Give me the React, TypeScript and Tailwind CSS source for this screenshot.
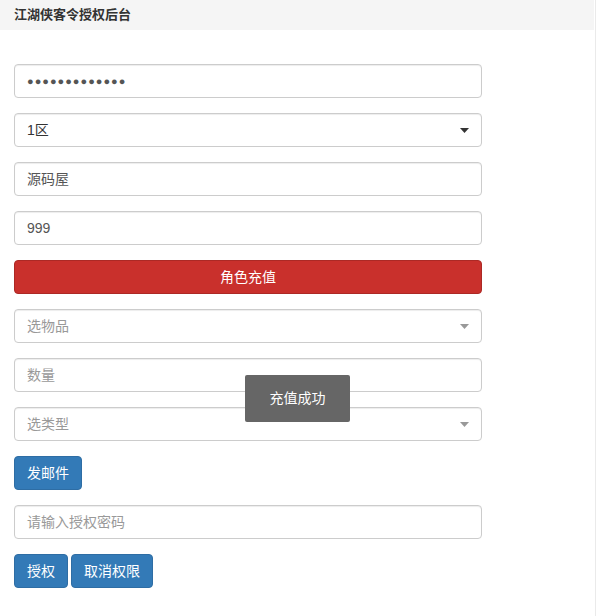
import React from "react";

const font = { fontFamily: '"Liberation Sans", "Noto Sans CJK SC", sans-serif' };

const inputCls =
  "block w-[468px] h-[34px] px-[12px] border border-[#ccc] rounded-[4px] bg-white text-[14px] text-[#555] shadow-[inset_0_1px_1px_rgba(0,0,0,0.075)] flex items-center";

function Caret({ color }: { color: string }) {
  return (
    <svg width="9" height="5" viewBox="0 0 9 5" className="ml-auto">
      <path d="M0 0 L9 0 L4.5 5 Z" fill={color} />
    </svg>
  );
}

export default function App() {
  return (
    <div className="relative w-[598px] h-[616px] bg-white overflow-hidden" style={font}>
      <div className="absolute right-[2px] top-0 w-px h-full bg-[#eaeaea]" />
      <div className="h-[30px] w-[594px] bg-[#f5f5f5] flex items-center pl-[14px] text-[13px] font-bold text-[#333]">
        江湖侠客令授权后台
      </div>
      <div className="pl-[14px] pt-[34px] flex flex-col gap-[15px]">
        <div className={inputCls}>
          <span className="text-[#555] text-[11px] tracking-[1px]">●●●●●●●●●●●●●</span>
        </div>
        <div className={inputCls}>
          <span className="text-[#333]">1区</span>
          <Caret color="#333" />
        </div>
        <div className={inputCls}>源码屋</div>
        <div className={inputCls}>999</div>
        <div className="w-[468px] h-[34px] rounded-[4px] bg-[#c9302c] border border-[#ac2925] text-white text-[14px] flex items-center justify-center">
          角色充值
        </div>
        <div className={inputCls}>
          <span className="text-[#999]">选物品</span>
          <Caret color="#999" />
        </div>
        <div className={inputCls}>
          <span className="text-[#999]">数量</span>
        </div>
        <div className={inputCls}>
          <span className="text-[#999]">选类型</span>
          <Caret color="#999" />
        </div>
        <div className="flex">
          <div className="h-[34px] px-[12px] rounded-[4px] bg-[#337ab7] border border-[#2e6da4] text-white text-[14px] flex items-center">
            发邮件
          </div>
        </div>
        <div className={inputCls}>
          <span className="text-[#999]">请输入授权密码</span>
        </div>
        <div className="flex gap-[3px]">
          <div className="h-[34px] px-[12px] rounded-[4px] bg-[#337ab7] border border-[#2e6da4] text-white text-[14px] flex items-center">
            授权
          </div>
          <div className="h-[34px] px-[12px] rounded-[4px] bg-[#337ab7] border border-[#2e6da4] text-white text-[14px] flex items-center">
            取消权限
          </div>
        </div>
      </div>
      <div className="absolute left-[245px] top-[375px] w-[105px] h-[47px] bg-[#666] rounded-[2px] flex items-center justify-center text-white text-[14px]">
        充值成功
      </div>
    </div>
  );
}
